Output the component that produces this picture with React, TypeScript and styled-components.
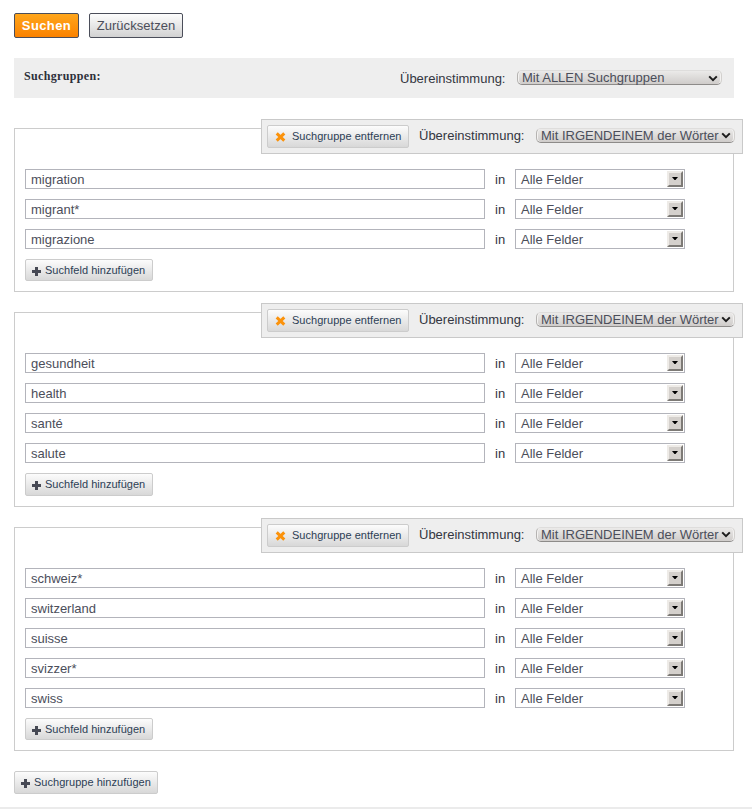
import React from "react";
import styled, { createGlobalStyle } from "styled-components";

const GlobalStyle = createGlobalStyle`
  * { box-sizing: border-box; }
  body {
    margin: 0;
    background: #fff;
    color: #333641;
    font: 13px/16px "Liberation Sans", Arial, sans-serif;
  }
`;

const Page = styled.main`
  display: flex;
  flex-direction: column;
  width: 752px;
  height: 809px;
  padding: 13px 0 0 14px;
  overflow: hidden;
`;

const Actions = styled.div`
  display: flex;
  gap: 10px;
  margin-bottom: 20px;
`;

const ActionButton = styled.button<{ $primary?: boolean }>`
  width: ${(p) => (p.$primary ? 65 : 94)}px;
  height: 25px;
  padding: 0 0 1px;
  border: 1px solid #4b4e5a;
  border-radius: 2px;
  background: ${(p) =>
    p.$primary ? "linear-gradient(#ffa61b, #fb8200)" : "linear-gradient(#fdfdfd, #d2d2d2)"};
  color: ${(p) => (p.$primary ? "#fff" : "#4b4e5a")};
  font: ${(p) => (p.$primary ? "bold" : "normal")} 13px/21px "Liberation Sans", Arial, sans-serif;
  letter-spacing: ${(p) => (p.$primary ? 0.4 : 0.05)}px;
  white-space: nowrap;
`;

const Heading = styled.header`
  display: flex;
  align-items: center;
  flex: none;
  width: 720px;
  height: 40px;
  margin-bottom: 30px;
  padding: 0 12px 0 10px;
  background: #eee;
`;

const Title = styled.h1`
  margin: 0 auto 4px 0;
  color: #2d303a;
  font: bold 12px/16px "Liberation Serif", "Times New Roman", serif;
  letter-spacing: 0.35px;
`;

const Label = styled.span`
  width: 105px;
  padding-top: 2px;
  margin-right: 12px;
  white-space: nowrap;
`;

const MatchSelect = styled.button<{ $width: number }>`
  display: flex;
  align-items: center;
  justify-content: space-between;
  flex: none;
  width: ${(p) => p.$width}px;
  height: 15px;
  margin-bottom: 1px;
  padding: 0 3px 0 4px;
  border: 1px solid #d2d0ce;
  border-top-color: #dedddc;
  border-left-color: #b5b3b1;
  border-bottom-color: #8d8b89;
  border-radius: 5px;
  background: linear-gradient(#ebeae9, #cfccca);
  box-shadow: inset 1px 0 #f3f2f1, inset -1px 0 #f3f2f1;
  color: #4b4e5a;
  font: 13px/15px "Liberation Sans", Arial, sans-serif;
  white-space: nowrap;

  svg { flex: none; margin-top: 1px; }
`;

const Group = styled.section<{ $height: number }>`
  display: flex;
  flex: none;
  flex-direction: column;
  align-items: flex-start;
  width: 720px;
  height: ${(p) => p.$height}px;
  margin-bottom: 20px;
  padding-left: 10px;
  border: 1px solid #ccc;
`;

const GroupBar = styled.div`
  display: flex;
  align-items: center;
  align-self: flex-end;
  flex: none;
  width: 482px;
  height: 35px;
  margin: -10px -10px 15px 0;
  padding: 0 0 1px 5px;
  border: 1px solid #c9c9c9;
  background: #eee;

  ${Label} { padding-top: 0; }
  ${MatchSelect} { margin: -1px 0 1px; }
`;

const SmallButton = styled.button<{ $width: number; $height: number; $gap: number }>`
  display: flex;
  align-items: center;
  flex: none;
  gap: ${(p) => p.$gap}px;
  width: ${(p) => p.$width}px;
  height: ${(p) => p.$height}px;
  padding: 0 0 1px 6px;
  border: 1px solid #ccc;
  border-radius: 2px;
  background: linear-gradient(#fcfcfc, #d8d8d8);
  color: #2c3e55;
  font: 11px/16px "Liberation Sans", Arial, sans-serif;
  letter-spacing: 0.03px;
  white-space: nowrap;

  svg { flex: none; margin-top: 3px; }
`;

const RemoveButton = styled(SmallButton)`
  margin: 1px 10px 0 0;
  padding-left: 7px;

  svg { margin-top: 2px; }
`;

const Row = styled.div`
  display: flex;
  align-items: center;
  height: 20px;
  margin-bottom: 10px;
`;

const TextField = styled.input`
  width: 460px;
  height: 20px;
  padding: 1px 5px 0;
  border: 1px solid #b3b4bb;
  border-radius: 0;
  outline: 0;
  background: #fff;
  color: #4b4e5a;
  font: 13px/16px "Liberation Sans", Arial, sans-serif;
`;

const Joiner = styled.span`
  width: 30px;
  padding: 1px 0 0 10px;
`;

const FieldSelect = styled.button`
  display: flex;
  align-items: center;
  justify-content: space-between;
  width: 170px;
  height: 20px;
  padding: 0 1px 0 5px;
  border: 1px solid #b3b4bb;
  background: #fff;
  color: #4b4e5a;
  font: 13px/16px "Liberation Sans", Arial, sans-serif;

  span { padding-top: 1px; }
`;

const Drop = styled.i`
  display: flex;
  align-items: center;
  justify-content: center;
  width: 16px;
  height: 16px;
  padding-bottom: 1px;
  border: 2px solid;
  border-color: #eeebe7 #7d7a76 #7d7a76 #eeebe7;
  background: #d4d0cc;
`;

const PageEnd = styled.footer`
  flex: none;
  height: 2px;
  margin: 13px 0 0 -14px;
  background: #ebebeb;
`;

const Plus = () => (
  <svg width="9" height="9" viewBox="0 0 9 9">
    <path d="M3 0h3v3h3v3H6v3H3V6H0V3h3z" fill="#464954" />
  </svg>
);

const Cross = () => (
  <svg width="11" height="10" viewBox="0 0 11 10">
    <path d="M1.7 1.4 9.3 8.6M9.3 1.4 1.7 8.6" stroke="#fb920b" strokeWidth="3" />
  </svg>
);

const Chevron = () => (
  <svg width="10" height="7" viewBox="0 0 10 7">
    <path d="m1.2 1.4 3.8 3.8 3.8-3.8" fill="none" stroke="#1b1b1b" strokeWidth="2" />
  </svg>
);

const Triangle = () => (
  <svg width="6" height="3" viewBox="0 0 6 3">
    <path d="M0 0h6L3.5 3h-1z" fill="#000" />
  </svg>
);

const groups = [
  { height: 164, terms: ["migration", "migrant*", "migrazione"] },
  { height: 195, terms: ["gesundheit", "health", "santé", "salute"] },
  { height: 224, terms: ["schweiz*", "switzerland", "suisse", "svizzer*", "swiss"] },
];

export default function App() {
  return (
    <>
      <GlobalStyle />
      <Page>
        <Actions>
          <ActionButton $primary>Suchen</ActionButton>
          <ActionButton>Zurücksetzen</ActionButton>
        </Actions>
        <Heading>
          <Title>Suchgruppen:</Title>
          <Label>Übereinstimmung:</Label>
          <MatchSelect $width={205}>
            Mit ALLEN Suchgruppen
            <Chevron />
          </MatchSelect>
        </Heading>
        {groups.map((group) => (
          <Group key={group.terms[0]} $height={group.height}>
            <GroupBar>
              <RemoveButton $width={142} $height={23} $gap={6}>
                <Cross />
                Suchgruppe entfernen
              </RemoveButton>
              <Label>Übereinstimmung:</Label>
              <MatchSelect $width={199}>
                Mit IRGENDEINEM der Wörter
                <Chevron />
              </MatchSelect>
            </GroupBar>
            {group.terms.map((term) => (
              <Row key={term}>
                <TextField defaultValue={term} />
                <Joiner>in</Joiner>
                <FieldSelect>
                  <span>Alle Felder</span>
                  <Drop>
                    <Triangle />
                  </Drop>
                </FieldSelect>
              </Row>
            ))}
            <SmallButton $width={128} $height={group.terms.length === 4 ? 23 : 22} $gap={4}>
              <Plus />
              Suchfeld hinzufügen
            </SmallButton>
          </Group>
        ))}
        <SmallButton $width={144} $height={23} $gap={4}>
          <Plus />
          Suchgruppe hinzufügen
        </SmallButton>
        <PageEnd />
      </Page>
    </>
  );
}
